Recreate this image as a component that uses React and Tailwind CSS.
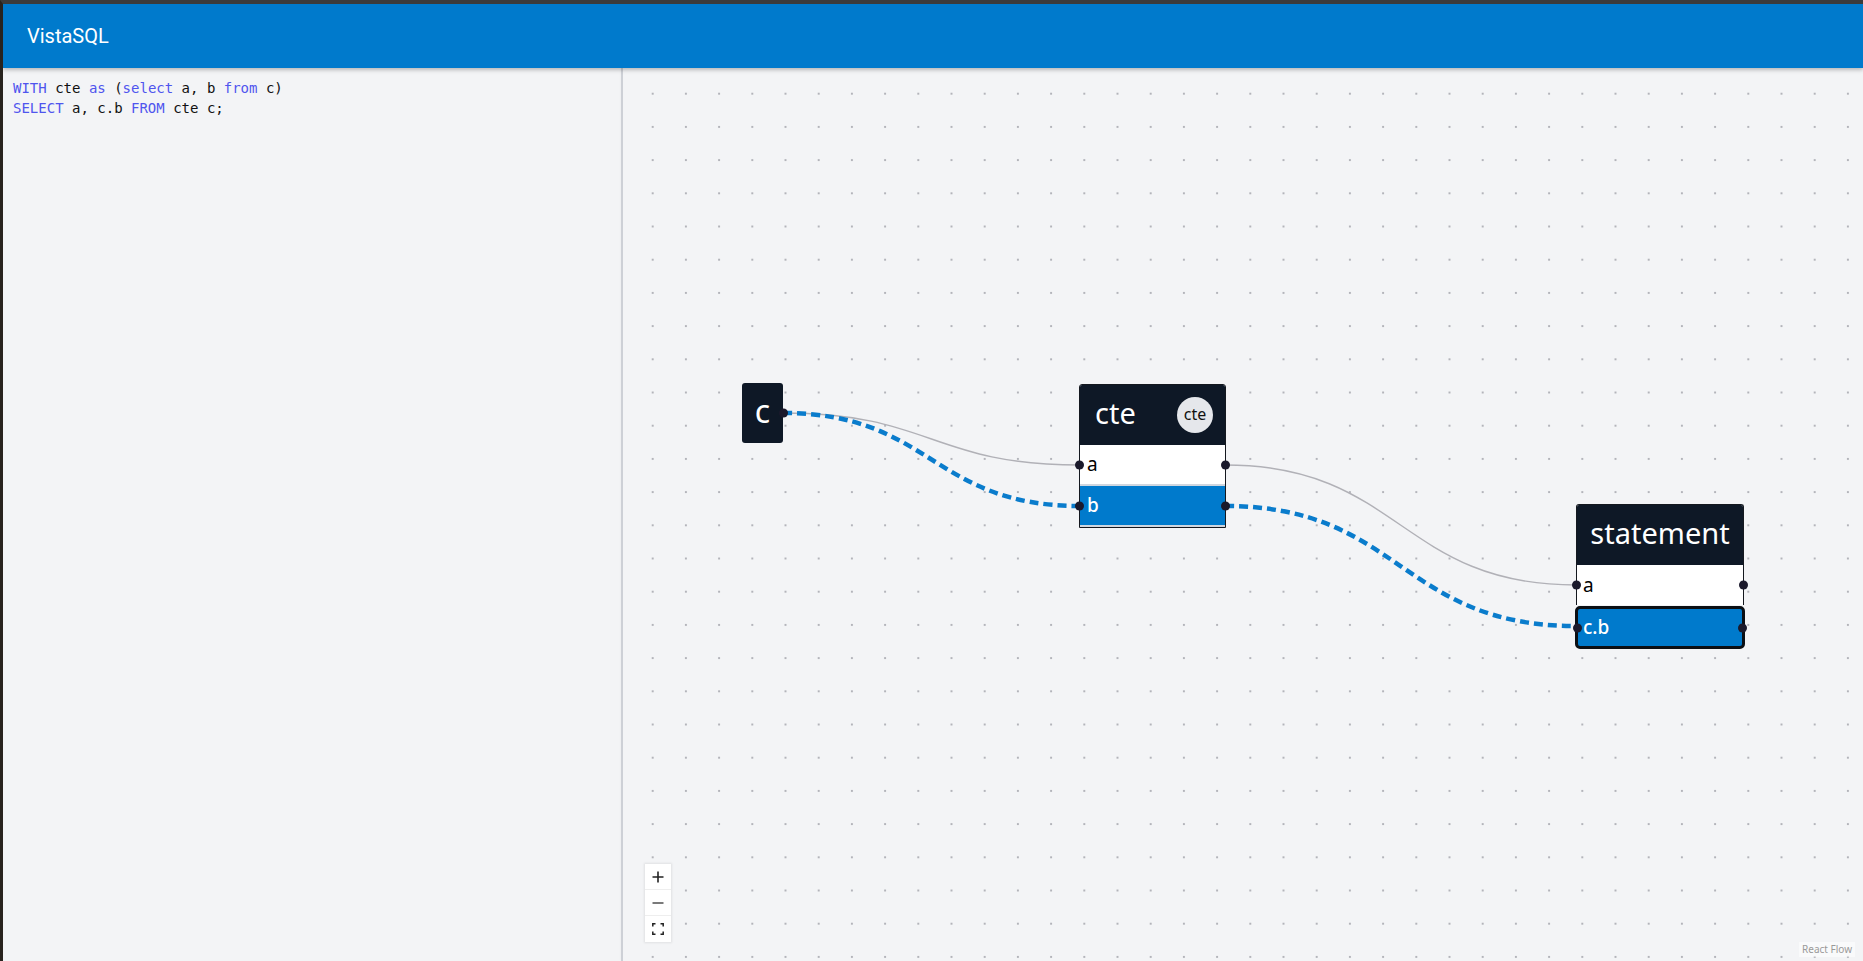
import React from "react"

const SANS = { fontFamily: "'Noto Sans', 'Open Sans', sans-serif" }

function Handle({ side }) {
  return (
    <span
      className={
        "absolute top-1/2 -translate-y-1/2 w-[9px] h-[9px] rounded-full bg-[#1a192b] " +
        (side === "left" ? "-left-[5px]" : "-right-[5px]")
      }
    />
  )
}

function Row({ label, active, selected }) {
  if (selected) {
    return (
      <div className="relative h-[43px] flex items-center px-[5px] bg-[#007acc] text-white text-[19px] font-medium border-[3px] border-[#0b0f14] rounded-[5px] -mx-px">
        <Handle side="left" />
        {label}
        <Handle side="right" />
      </div>
    )
  }
  return (
    <div
      className={
        "relative h-[41px] flex items-center px-[7px] text-[19px] border-b-2 border-[#cfd6df] " +
        (active ? "bg-[#007acc] text-white font-medium" : "bg-white text-black")
      }
    >
      <Handle side="left" />
      {label}
      <Handle side="right" />
    </div>
  )
}

function Edges() {
  const gray = [
    [160, 345, 457, 397],
    [602, 397, 953, 517],
  ]
  const blue = [
    [160, 345, 457, 438],
    [602, 438, 953, 558],
  ]
  const d = ([sx, sy, tx, ty]) => {
    const h = (tx - sx) / 2
    return `M${sx},${sy} C${sx + h},${sy} ${tx - h},${ty} ${tx},${ty}`
  }
  return (
    <svg className="absolute inset-0 w-full h-full pointer-events-none">
      <defs>
        <pattern id="dots" x="13.1" y="9.1" width="33.2" height="33.2" patternUnits="userSpaceOnUse">
          <rect x="15.6" y="15.6" width="2" height="2" fill="#b3b4ba" />
        </pattern>
      </defs>
      <rect width="100%" height="100%" fill="url(#dots)" />
      {gray.map((e, i) => (
        <path key={"g" + i} d={d(e)} fill="none" stroke="#b1b1b7" strokeWidth="1.4" />
      ))}
      {blue.map((e, i) => (
        <path key={"b" + i} d={d(e)} fill="none" stroke="#0a7ccc" strokeWidth="4.5" strokeDasharray="9 5" />
      ))}
    </svg>
  )
}

function Controls() {
  return (
    <div className="absolute left-[22px] bottom-[19px] w-[26px] bg-white shadow-[0_0_2px_1px_rgba(0,0,0,0.08)] flex flex-col">
      <button className="h-[26px] flex items-center justify-center border-b border-[#eee]" type="button">
        <svg width="12" height="12" viewBox="0 0 12 12">
          <path d="M6 0.5v11M0.5 6h11" stroke="#222" strokeWidth="1.6" />
        </svg>
      </button>
      <button className="h-[26px] flex items-center justify-center border-b border-[#eee]" type="button">
        <svg width="12" height="12" viewBox="0 0 12 12">
          <path d="M0.5 6h11" stroke="#222" strokeWidth="1.2" />
        </svg>
      </button>
      <button className="h-[26px] flex items-center justify-center" type="button">
        <svg width="12" height="12" viewBox="0 0 12 12" fill="none" stroke="#222" strokeWidth="1.5">
          <path d="M0.8 3.5V0.8H3.5M8.5 0.8h2.7v2.7M11.2 8.5v2.7H8.5M3.5 11.2H0.8V8.5" />
        </svg>
      </button>
    </div>
  )
}

export default function App() {
  const kw = "text-[#4f55ee]"
  return (
    <div className="h-screen flex flex-col border-t-4 border-t-[#3b3b3b] border-l-[3px] border-l-[#28231e] bg-[#f3f4f6] overflow-hidden">
      {/* Header */}
      <header
        className="h-16 shrink-0 bg-[#007acc] flex items-center pl-6 text-white text-[20px] shadow-[0_2px_4px_rgba(0,0,0,0.25)] relative z-10"
        style={{ fontFamily: "Roboto, 'Liberation Sans', sans-serif" }}
      >
        VistaSQL
      </header>

      <div className="flex-1 flex min-h-0">
        {/* Editor */}
        <div
          className="w-[618px] shrink-0 pt-[10px] pl-[10px] text-[14px] leading-5 text-[#111] bg-[#f3f4f6] whitespace-pre"
          style={{ fontFamily: "'DejaVu Sans Mono', monospace" }}
        >
          <div>
            <span className={kw}>WITH</span> cte <span className={kw}>as</span> (<span className={kw}>select</span> a, b{" "}
            <span className={kw}>from</span> c)
          </div>
          <div>
            <span className={kw}>SELECT</span> a, c.b <span className={kw}>FROM</span> cte c;
          </div>
        </div>

        <div className="w-[2px] shrink-0 bg-[#cdd0d6] shadow-[1px_0_3px_rgba(0,0,0,0.12)]" />

        {/* Canvas */}
        <div className="flex-1 relative bg-[#f3f4f6]" style={SANS}>
          <Edges />

          {/* c */}
          <div className="absolute left-[119px] top-[315px] w-[41px] h-[60px] rounded-[3px] bg-[#0e1826] text-white text-[32px] flex items-center justify-center pb-1">
            c
            <Handle side="right" />
          </div>

          {/* cte */}
          <div className="absolute left-[456px] top-[316px] w-[147px] border border-[#14181f] rounded-t-[3px] bg-white">
            <div className="h-[60px] bg-[#0e1826] flex items-center justify-between pl-[15px] pr-[12px] rounded-t-[2px]">
              <span className="text-white text-[29px] pb-1">cte</span>
              <span className="w-[36px] h-[36px] rounded-full bg-[#e5e7eb] text-[#111] text-[16px] flex items-center justify-center pb-[2px]">
                cte
              </span>
            </div>
            <Row label="a" />
            <Row label="b" active />
          </div>

          {/* statement */}
          <div className="absolute left-[953px] top-[436px] w-[168px]">
            <div className="border border-b-0 border-[#14181f] rounded-t-[3px] bg-white">
              <div className="h-[60px] bg-[#0e1826] flex items-center justify-center rounded-t-[2px]">
                <span className="text-white text-[29px] pb-1">statement</span>
              </div>
              <div className="relative h-[40px] flex items-center px-[6px] text-[19px] bg-white text-black">
                <Handle side="left" />
                a
                <Handle side="right" />
              </div>
            </div>
            <div className="pt-[1px]">
              <Row label="c.b" selected />
            </div>
          </div>

          <Controls />

          <div className="absolute right-[8px] bottom-[4px] px-[3px] bg-white/50 text-[10px] text-[#999]">
            React Flow
          </div>
        </div>
      </div>
    </div>
  )
}
